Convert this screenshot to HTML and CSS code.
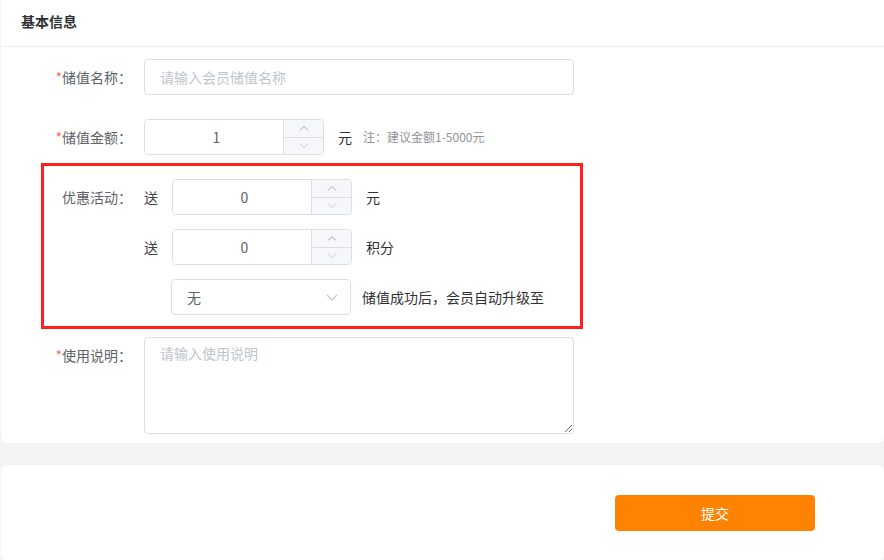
FILE: index.html
```html
<!DOCTYPE html>
<html lang="zh-CN">
<head>
    <meta charset="UTF-8">
    <meta name="viewport" content="width=device-width, initial-scale=1.0">
    <title>储值设置</title>
    <link rel="stylesheet" href="styles.css">
</head>
<body>
    <div class="panel">
        <div class="panel-head">基本信息</div>
        <div class="form">
            <div class="form-item">
                <label class="form-label"><span class="req">*</span>储值名称：</label>
                <input class="input" type="text" placeholder="请输入会员储值名称">
            </div>
            <div class="form-item">
                <label class="form-label"><span class="req">*</span>储值金额：</label>
                <div class="num-input">
                    <input type="text" value="1">
                    <div class="num-ctrl">
                        <span class="num-btn"><svg width="10" height="6" viewBox="0 0 10 6"><path d="M1 5.5 5 1.5 9 5.5" fill="none" stroke="#a8abb2" stroke-width="1"/></svg></span>
                        <span class="num-btn"><svg width="10" height="6" viewBox="0 0 10 6"><path d="M1 0.5 5 4.5 9 0.5" fill="none" stroke="#c8cad0" stroke-width="1"/></svg></span>
                    </div>
                </div>
                <span class="unit">元</span>
                <span class="tip">注：建议金额1-5000元</span>
            </div>

            <div class="promo">
                <div class="promo-row">
                    <label class="form-label">优惠活动：</label>
                    <span class="give">送</span>
                    <div class="num-input">
                        <input type="text" value="0">
                        <div class="num-ctrl">
                            <span class="num-btn"><svg width="10" height="6" viewBox="0 0 10 6"><path d="M1 5.5 5 1.5 9 5.5" fill="none" stroke="#a8abb2" stroke-width="1"/></svg></span>
                            <span class="num-btn"><svg width="10" height="6" viewBox="0 0 10 6"><path d="M1 0.5 5 4.5 9 0.5" fill="none" stroke="#c8cad0" stroke-width="1"/></svg></span>
                        </div>
                    </div>
                    <span class="unit">元</span>
                </div>
                <div class="promo-row">
                    <label class="form-label"></label>
                    <span class="give">送</span>
                    <div class="num-input">
                        <input type="text" value="0">
                        <div class="num-ctrl">
                            <span class="num-btn"><svg width="10" height="6" viewBox="0 0 10 6"><path d="M1 5.5 5 1.5 9 5.5" fill="none" stroke="#a8abb2" stroke-width="1"/></svg></span>
                            <span class="num-btn"><svg width="10" height="6" viewBox="0 0 10 6"><path d="M1 0.5 5 4.5 9 0.5" fill="none" stroke="#c8cad0" stroke-width="1"/></svg></span>
                        </div>
                    </div>
                    <span class="unit">积分</span>
                </div>
                <div class="promo-row">
                    <label class="form-label"></label>
                    <div class="select">
                        <span>无</span>
                        <svg width="12" height="7" viewBox="0 0 12 7"><path d="M1 1 6 6 11 1" fill="none" stroke="#c0c4cc" stroke-width="1.2"/></svg>
                    </div>
                    <span class="after">储值成功后，会员自动升级至</span>
                </div>
            </div>

            <div class="form-item">
                <label class="form-label"><span class="req">*</span>使用说明：</label>
                <textarea class="textarea" placeholder="请输入使用说明"></textarea>
            </div>
        </div>
    </div>

    <div class="footer">
        <button class="btn-submit">提交</button>
    </div>
</body>
</html>
```

FILE: styles.css
```css
body {
    margin: 0;
    background: #f3f3f3;
    font-family: "Noto Sans CJK SC", "Liberation Sans", sans-serif;
    font-size: 14px;
    color: #606266;
}
.panel {
    margin-left: 1px;
    background: #fff;
    border-radius: 0 0 6px 6px;
    padding-bottom: 9px;
}
.panel-head {
    height: 46px;
    line-height: 43px;
    padding-left: 20px;
    font-weight: bold;
    color: #303133;
    border-bottom: 1px solid #eeeeee;
}
.form {
    padding-top: 12px;
}
.form-item {
    display: flex;
    align-items: flex-start;
    margin-bottom: 24px;
}
.form-item:last-child {
    margin-bottom: 0;
}
.form-label {
    width: 143px;
    box-sizing: border-box;
    padding-right: 12px;
    text-align: right;
    line-height: 36px;
    flex-shrink: 0;
}
.req {
    color: #f56c6c;
}
.input {
    width: 430px;
    height: 36px;
    box-sizing: border-box;
    border: 1px solid #dcdfe6;
    border-radius: 4px;
    padding: 0 15px;
    font: inherit;
    color: #606266;
    outline: none;
}
.input::placeholder,
.textarea::placeholder {
    color: #c0c4cc;
}
.num-input {
    width: 180px;
    height: 36px;
    box-sizing: border-box;
    border: 1px solid #dcdfe6;
    border-radius: 4px;
    display: flex;
    overflow: hidden;
    flex-shrink: 0;
}
.num-input input {
    flex: 1;
    min-width: 0;
    border: none;
    outline: none;
    font: inherit;
    color: #606266;
    text-align: center;
    padding: 0 0 0 15px;
    margin-right: 10px;
}
.num-ctrl {
    width: 39px;
    border-left: 1px solid #dcdfe6;
    background: #f5f7fa;
    display: flex;
    flex-direction: column;
}
.num-btn {
    flex: 1;
    display: flex;
    align-items: center;
    justify-content: center;
}
.num-btn:first-child {
    border-bottom: 1px solid #dcdfe6;
}
.unit {
    line-height: 36px;
    margin-left: 14px;
    color: #303133;
}
.tip {
    line-height: 36px;
    margin-left: 11px;
    font-size: 12px;
    color: #909399;
}
.promo {
    width: 542px;
    box-sizing: border-box;
    margin: -16px 0 8px 40px;
    border: 3px solid #ff1f1f;
    padding: 13px 0 11px;
}
.promo-row {
    display: flex;
    margin-bottom: 14px;
}
.promo-row:last-child {
    margin-bottom: 0;
}
.promo .form-label {
    width: 100px;
}
.give {
    line-height: 36px;
    width: 28px;
    color: #404246;
}
.select {
    width: 180px;
    height: 36px;
    box-sizing: border-box;
    border: 1px solid #dcdfe6;
    border-radius: 4px;
    margin-left: 27px;
    padding: 0 12px 0 15px;
    display: flex;
    align-items: center;
    justify-content: space-between;
    color: #606266;
}
.after {
    line-height: 36px;
    margin-left: 11px;
    color: #303133;
}
.textarea {
    width: 430px;
    height: 97px;
    box-sizing: border-box;
    border: 1px solid #dcdfe6;
    border-radius: 4px;
    padding: 5px 15px;
    font: inherit;
    line-height: 1.5;
    color: #606266;
    outline: none;
}
.footer {
    margin: 22px 0 0 1px;
    background: #fff;
    border-radius: 6px;
    height: 95px;
    padding-top: 30px;
    box-sizing: border-box;
}
.btn-submit {
    margin-left: 614px;
    width: 200px;
    height: 36px;
    border: none;
    border-radius: 4px;
    background: #ff8200;
    color: #fff;
    font: inherit;
    cursor: pointer;
}
```
